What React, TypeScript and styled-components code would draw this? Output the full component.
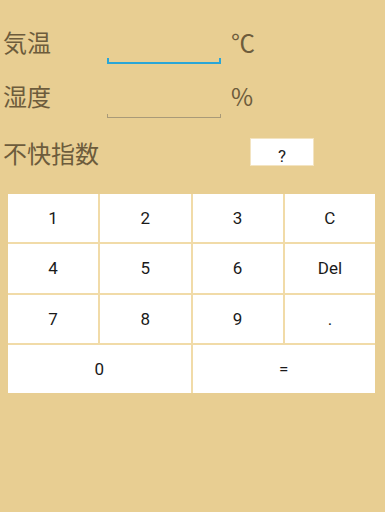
import React from "react";
import styled, { createGlobalStyle } from "styled-components";

const Global = createGlobalStyle`
  html, body { margin: 0; padding: 0; background: #e8ce92; }
  body { width: 385px; height: 512px; overflow: hidden; }
`;

const Page = styled.div`
  width: 385px;
  height: 512px;
  background: #e8ce92;
  padding-top: 15px;
  box-sizing: border-box;
  font-family: "Noto Sans CJK JP", "Noto Sans", sans-serif;
`;

const FieldRow = styled.div`
  display: grid;
  grid-template-columns: 104px 114px auto;
  align-items: center;
  height: 54px;
  padding-left: 3px;
`;

const Label = styled.div`
  font-size: 24px;
  line-height: 1;
  color: #6d5c3c;
`;

const Unit = styled.div`
  font-size: 24px;
  line-height: 1;
  color: #6d5c3c;
  padding-left: 10px;
`;

const Field = styled.div`
  display: flex;
  flex-direction: column;
  align-self: end;
  margin-bottom: 5px;
`;

const Input = styled.input`
  border: none;
  outline: none;
  background: transparent;
  height: 30px;
  padding: 0 6px;
  font-size: 18px;
  font-family: Roboto, sans-serif;
  width: 100%;
  min-width: 0;
  box-sizing: border-box;
`;

const Underline = styled.div<{ $active?: boolean }>`
  height: ${(p) => (p.$active ? "4px" : "3px")};
  border: ${(p) => (p.$active ? "2px solid #2aa6d6" : "1px solid #a99a78")};
  border-top: none;
`;

const ResultRow = styled.div`
  display: grid;
  grid-template-columns: 247px 64px;
  align-items: center;
  height: 60px;
  padding-left: 3px;
`;

const ResultBox = styled.div`
  height: 28px;
  background: #ffffff;
  border: 1px solid #f3e4c2;
  box-sizing: border-box;
  display: flex;
  align-items: flex-end;
  justify-content: center;
  font-family: Roboto, sans-serif;
  font-size: 17px;
  line-height: 1;
  color: #222;
  margin-top: -3px;
`;

const Keypad = styled.div`
  margin: 11px 10px 0 8px;
  display: grid;
  grid-template-columns: repeat(4, 1fr);
  grid-auto-rows: 48.25px;
  gap: 2px;
  background: #f1dba8;
`;

const Key = styled.button<{ $span?: number }>`
  grid-column: span ${(p) => p.$span ?? 1};
  border: none;
  margin: 0;
  padding: 0;
  background: #ffffff;
  font-family: Roboto, sans-serif;
  font-size: 17px;
  color: #1a1a1a;
  display: flex;
  align-items: center;
  justify-content: center;
`;

const keys: { label: string; span?: number }[] = [
  { label: "1" }, { label: "2" }, { label: "3" }, { label: "C" },
  { label: "4" }, { label: "5" }, { label: "6" }, { label: "Del" },
  { label: "7" }, { label: "8" }, { label: "9" }, { label: "." },
  { label: "0", span: 2 }, { label: "=", span: 2 },
];

export default function App() {
  return (
    <>
      <Global />
      <Page>
        <FieldRow>
          <Label>気温</Label>
          <Field>
            <Input />
            <Underline $active />
          </Field>
          <Unit>℃</Unit>
        </FieldRow>
        <FieldRow>
          <Label>湿度</Label>
          <Field>
            <Input />
            <Underline />
          </Field>
          <Unit>%</Unit>
        </FieldRow>
        <ResultRow>
          <Label>不快指数</Label>
          <ResultBox>?</ResultBox>
        </ResultRow>
        <Keypad>
          {keys.map((k) => (
            <Key key={k.label} $span={k.span}>
              {k.label}
            </Key>
          ))}
        </Keypad>
      </Page>
    </>
  );
}
